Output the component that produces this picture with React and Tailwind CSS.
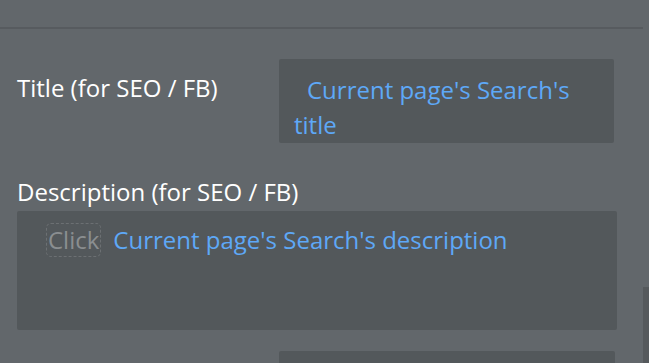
import React from 'react';

const App = () => {
  return (
    <div
      className="relative w-[649px] h-[363px] overflow-hidden bg-[#62676b] text-white"
      style={{ fontFamily: '"Open Sans", "Noto Sans", sans-serif' }}
    >
      {/* top divider */}
      <div className="h-[27px]" />
      <div className="h-[2px] w-[643px] bg-[#575b5f]" />

      {/* Title row */}
      <div className="mt-[30px] flex">
        <div className="w-[279px] pl-[17px] pt-[14px] text-[24px] leading-[30px]">Title (for SEO / FB)</div>
        <div className="h-[84px] w-[335px] rounded-[2px] bg-[#53585b] pl-[15px] pr-[10px] pt-[13px] text-[24px] leading-[35px] text-[#5ea8f7] indent-[13px]">
          Current page's Search's title
        </div>
      </div>

      {/* Description */}
      <div className="mt-[34px] pl-[17px] text-[24px] leading-[30px]">Description (for SEO / FB)</div>
      <div className="ml-[17px] mt-[4px] h-[119px] w-[600px] rounded-[2px] bg-[#53585b] pl-[29px] pt-[12px]">
        <div className="flex items-center text-[24px] leading-[32px]">
          <span className="rounded-[5px] border border-dashed border-[#6c7073] px-[1px] text-[#8a8e90]">Click</span>
          <span className="ml-[12px] text-[#5ea8f7]">Current page's Search's description</span>
        </div>
      </div>

      {/* next field */}
      <div className="ml-[279px] mt-[21px] h-[40px] w-[336px] rounded-[2px] bg-[#53585b]" />

      {/* scrollbar */}
      <div className="absolute right-0 top-[287px] h-[76px] w-[6px] bg-[#55595c]" />
    </div>
  );
};

export default App;
